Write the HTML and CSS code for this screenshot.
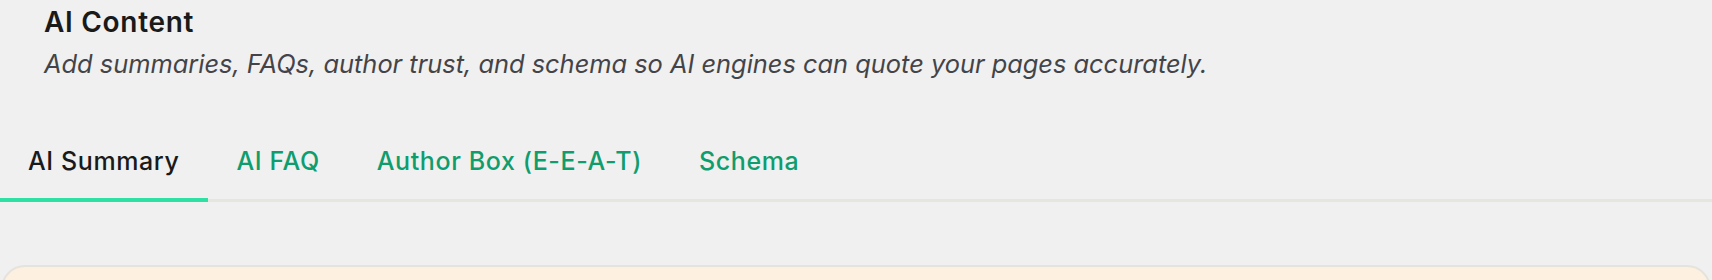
FILE: index.html
```html
<!DOCTYPE html>
<html lang="en">
<head>
  <meta charset="UTF-8">
  <meta name="viewport" content="width=device-width, initial-scale=1.0">
  <title>AI Content</title>
  <link rel="stylesheet" href="styles.css">
</head>
<body>
  <div class="header">
    <h1 class="title">AI Content</h1>
    <p class="subtitle">Add summaries, FAQs, author trust, and schema so AI engines can quote your pages accurately.</p>
  </div>

  <div class="tabs">
    <a class="tab active" href="#">AI Summary</a>
    <a class="tab" href="#">AI FAQ</a>
    <a class="tab" href="#">Author Box (E-E-A-T)</a>
    <a class="tab" href="#">Schema</a>
  </div>

  <div class="notice"></div>
</body>
</html>
```

FILE: styles.css
```css
body {
  margin: 0;
  background: #f0f0f0;
  font-family: Inter, 'Noto Sans', sans-serif;
  color: #1c1c1e;
}

.header {
  padding: 5px 44px 0;
}

.title {
  margin: 0;
  font-size: 28px;
  line-height: 34px;
  font-weight: 600;
  letter-spacing: 0.7px;
  color: #1a1a1a;
}

.subtitle {
  margin: 9px 0 0;
  font-size: 25.4px;
  line-height: 32px;
  font-style: italic;
  color: #444448;
}

.tabs {
  display: flex;
  margin-top: 43px;
  box-shadow: inset 0 -3px 0 #e6e6e0;
}

.tab {
  padding: 22px 29px 21px 28px;
  font-size: 25px;
  line-height: 32px;
  font-weight: 500;
  letter-spacing: 0.6px;
  color: #0f9d6e;
  text-decoration: none;
  border-bottom: 4px solid transparent;
}

.tab.active {
  color: #1a1a1a;
  border-bottom-color: #2fe0a4;
}

.notice {
  margin: 63px 1px 0;
  height: 80px;
  background: #fdf0e0;
  border: 2px solid #e4e3dc;
  border-radius: 24px;
}
```
